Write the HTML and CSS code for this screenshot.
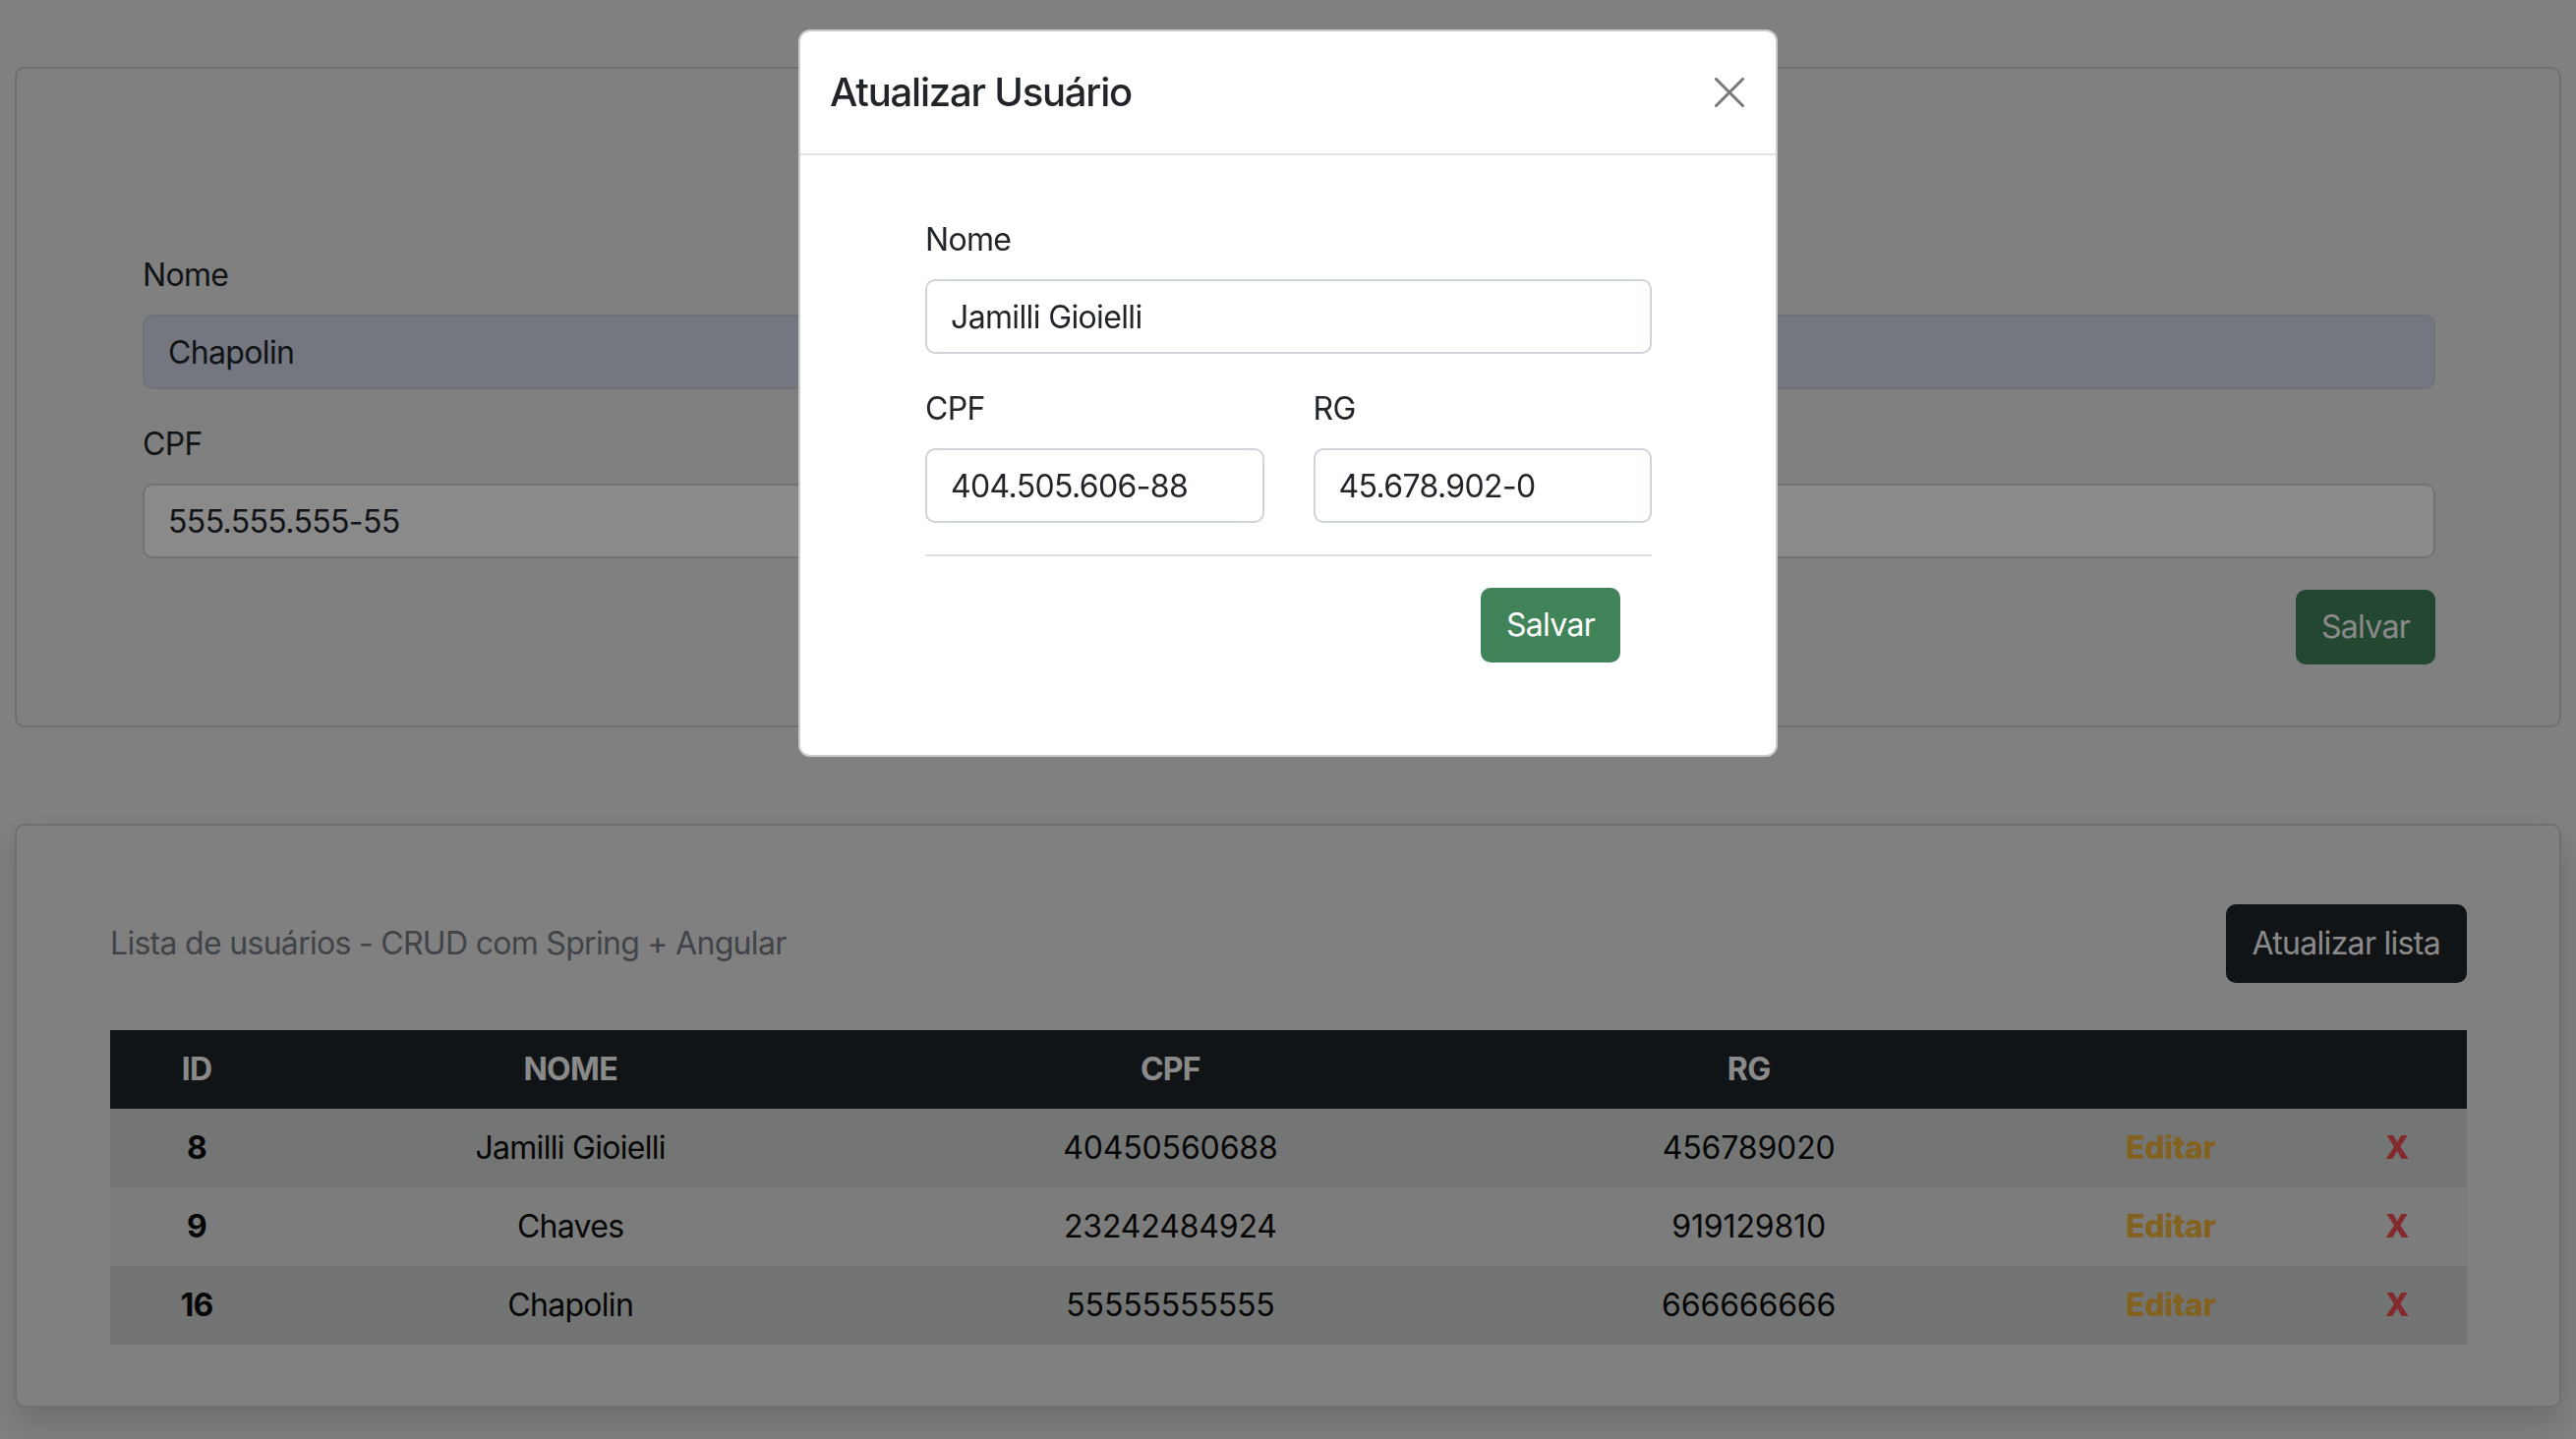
FILE: index.html
```html
<!DOCTYPE html>
<html lang="pt-BR">
<head>
<meta charset="utf-8">
<title>CRUD com Spring + Angular</title>
<link rel="stylesheet" href="styles.css">
</head>
<body>
<main class="page">
  <section class="card form-card">
    <form class="user-form">
      <div class="field">
        <label class="label">Nome</label>
        <input class="input input-autofill" type="text" value="Chapolin">
      </div>
      <div class="field">
        <label class="label">CPF</label>
        <input class="input" type="text" value="555.555.555-55">
      </div>
      <div class="actions">
        <button type="button" class="btn btn-success">Salvar</button>
      </div>
    </form>
  </section>

  <section class="card list-card">
    <div class="list-head">
      <span class="list-title">Lista de usuários - CRUD com Spring + Angular</span>
      <button type="button" class="btn btn-dark">Atualizar lista</button>
    </div>
    <table class="table">
      <colgroup>
        <col class="c-id"><col class="c-nome"><col class="c-cpf"><col class="c-rg"><col class="c-edit"><col class="c-del">
      </colgroup>
      <thead>
        <tr><th>ID</th><th>NOME</th><th>CPF</th><th>RG</th><th></th><th></th></tr>
      </thead>
      <tbody>
        <tr class="row-odd"><td class="id">8</td><td>Jamilli Gioielli</td><td class="num">40450560688</td><td class="num">456789020</td><td class="edit">Editar</td><td class="del">X</td></tr>
        <tr class="row-even"><td class="id">9</td><td>Chaves</td><td class="num">23242484924</td><td class="num">919129810</td><td class="edit">Editar</td><td class="del">X</td></tr>
        <tr class="row-hover"><td class="id">16</td><td>Chapolin</td><td class="num">55555555555</td><td class="num">666666666</td><td class="edit">Editar</td><td class="del">X</td></tr>
      </tbody>
    </table>
  </section>
</main>

<div class="backdrop"></div>

<div class="modal">
  <div class="modal-content">
    <div class="modal-header">
      <h5 class="modal-title">Atualizar Usuário</h5>
      <button type="button" class="btn-close" aria-label="Fechar">
        <svg width="30" height="30" viewBox="0 0 30 30"><path d="M1.5 1.5 L28.5 28.5 M28.5 1.5 L1.5 28.5" stroke="#777" stroke-width="3" stroke-linecap="round" fill="none"/></svg>
      </button>
    </div>
    <div class="modal-body">
      <div class="field">
        <label class="label">Nome</label>
        <input class="input" type="text" value="Jamilli Gioielli">
      </div>
      <div class="field-row">
        <div class="field">
          <label class="label">CPF</label>
          <input class="input" type="text" value="404.505.606-88">
        </div>
        <div class="field">
          <label class="label">RG</label>
          <input class="input" type="text" value="45.678.902-0">
        </div>
      </div>
      <hr class="divider">
      <div class="modal-actions">
        <button type="button" class="btn btn-success">Salvar</button>
      </div>
    </div>
  </div>
</div>
</body>
</html>
```

FILE: styles.css
```css
* { box-sizing: border-box; }

html, body {
  margin: 0;
  height: 100%;
}

body {
  background: #ededed;
  font-family: Inter, "Noto Sans", sans-serif;
  font-size: 32px;
  line-height: 48px;
  letter-spacing: -0.022em;
  color: #212529;
  overflow: hidden;
}

.page {
  padding: 68px 15px 0 15px;
  display: flex;
  flex-direction: column;
  gap: 98px;
}

.card {
  border: 2px solid #cdcdcd;
  border-radius: 10px;
}

.form-card {
  padding: 186px 126px 62px 128px;
}

.field {
  display: flex;
  flex-direction: column;
  margin-bottom: 32px;
}

.label {
  display: block;
  font-size: 32px;
  line-height: 48px;
  margin-bottom: 16px;
  color: #212529;
}

.input {
  font-family: inherit;
  font-size: 32px;
  line-height: 48px;
  letter-spacing: -0.02em;
  height: 76px;
  padding: 12px 24px;
  border: 2px solid #ced4da;
  border-radius: 10px;
  background: #fff;
  color: #212529;
  width: 100%;
}

.input-autofill {
  background: #d6dbed;
}

.actions {
  display: flex;
  justify-content: flex-end;
}

.btn {
  font-family: inherit;
  font-size: 32px;
  line-height: 48px;
  letter-spacing: -0.022em;
  padding: 12px 24px;
  border: 2px solid transparent;
  border-radius: 10px;
  color: #fff;
  cursor: pointer;
}

.btn-success {
  background: #41845a;
  border-color: #41845a;
}

.btn-dark {
  background: #212529;
  border-color: #212529;
  padding: 14px 25px;
}

.list-card {
  padding: 80px 94px 62px 95px;
  box-shadow: 0 16px 32px rgba(0, 0, 0, 0.15);
}

.list-head {
  display: flex;
  justify-content: space-between;
  align-items: center;
  margin-bottom: 48px;
}

.list-title {
  color: #767e86;
}

.table {
  width: 100%;
  border-collapse: collapse;
  table-layout: fixed;
}

.c-id { width: 176px; }
.c-nome { width: 584px; }
.c-cpf { width: 636px; }
.c-rg { width: 540px; }
.c-edit { width: 318px; }
.c-del { width: 142px; }

.table th,
.table td {
  height: 80px;
  padding: 16px;
  text-align: center;
  font-size: 32px;
  line-height: 48px;
}

.table thead th {
  background: #212529;
  color: #fff;
  font-weight: 700;
}

.table td {
  color: #0b0b0b;
}

.table td.num {
  letter-spacing: -0.005em;
}

.row-odd td { background: #d7dad9; }
.row-even td { background: #e4e6e4; }
.row-hover td { background: #d5d8d7; }

.table td.id { font-weight: 700; }
.table td.edit { color: #f2b63e; font-weight: 800; letter-spacing: -0.01em; }
.table td.del { color: #f24e55; font-weight: 800; }

.backdrop {
  position: fixed;
  inset: 0;
  background: rgba(0, 0, 0, 0.46);
}

.modal {
  position: fixed;
  inset: 0;
  display: flex;
  justify-content: center;
  align-items: flex-start;
  padding-top: 30px;
}

.modal-content {
  width: 996px;
  background: #fff;
  border: 2px solid rgba(0, 0, 0, 0.2);
  border-radius: 12px;
}

.modal-header {
  display: flex;
  align-items: center;
  justify-content: space-between;
  padding: 32px 32px 32px 30px;
  border-bottom: 2px solid #e3e3e6;
}

.modal-title {
  margin: 0;
  font-size: 40px;
  line-height: 60px;
  font-weight: 500;
  letter-spacing: -0.03em;
  color: #212529;
}

.btn-close {
  width: 30px;
  height: 30px;
  padding: 0;
  border: 0;
  background: transparent;
  display: flex;
}

.modal-body {
  padding: 62px 126px 94px 127px;
}

.field-row {
  display: grid;
  grid-template-columns: 1fr 1fr;
  column-gap: 50px;
}

.divider {
  margin: 0 0 32px 0;
  border: 0;
  border-top: 2px solid #dfdfe2;
}

.modal-actions {
  display: flex;
  justify-content: flex-end;
  padding-right: 32px;
}
```
